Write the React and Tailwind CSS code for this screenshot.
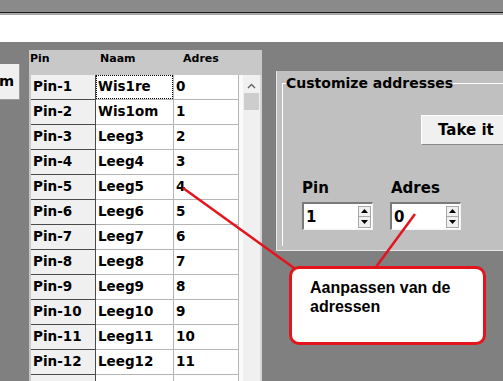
const rows = [
  ["Pin-1", "Wis1re", "0"],
  ["Pin-2", "Wis1om", "1"],
  ["Pin-3", "Leeg3", "2"],
  ["Pin-4", "Leeg4", "3"],
  ["Pin-5", "Leeg5", "4"],
  ["Pin-6", "Leeg6", "5"],
  ["Pin-7", "Leeg7", "6"],
  ["Pin-8", "Leeg8", "7"],
  ["Pin-9", "Leeg9", "8"],
  ["Pin-10", "Leeg10", "9"],
  ["Pin-11", "Leeg11", "10"],
  ["Pin-12", "Leeg12", "11"],
  ["", "", ""],
];

function Spinner({ value }) {
  return (
    <div className="w-[71px] h-[28px] flex items-center bg-white border-t-2 border-l-2 border-[#7a7a7a] border-b border-r border-b-[#f4f4f4] border-r-[#f4f4f4]">
      <span className="flex-1 pl-[2px] text-[15px] leading-[18px] font-bold text-black">{value}</span>
      <div className="flex flex-col mr-[1px]">
        <div className="w-[13px] h-[11px] flex items-center justify-center bg-[#f0f0f0] border border-[#a8a8a8]">
          <svg width="7" height="4" viewBox="0 0 7 4">
            <polygon points="3.5,0 7,4 0,4" fill="#000" />
          </svg>
        </div>
        <div className="w-[13px] h-[11px] flex items-center justify-center bg-[#f0f0f0] border border-[#a8a8a8] border-t-0">
          <svg width="7" height="4" viewBox="0 0 7 4">
            <polygon points="0,0 7,0 3.5,4" fill="#000" />
          </svg>
        </div>
      </div>
    </div>
  );
}

export default function App() {
  return (
    <div className="relative w-[503px] h-[381px] overflow-hidden bg-[#808080] font-['DejaVu_Sans',sans-serif] text-black">
      <div className="h-[12px] bg-[#8a8a8a]" />
      <div className="h-px bg-[#1e1e1e]" />
      <div className="h-[2px] bg-[#a6a6a6]" />
      <div className="h-[27px] bg-white" />

      <div className="flex h-[339px]">
        {/* clipped button on the left */}
        <div className="w-[29px] shrink-0">
          <div className="mt-[22px] w-[20px] h-[36px] flex items-center justify-end bg-[#f0f0f0] border-r border-b border-[#9a9a9a] overflow-hidden">
            <span className="text-[14.5px] font-bold leading-none pr-[5px]">m</span>
          </div>
        </div>

        {/* grid */}
        <div className="mt-[8px] w-[233px] shrink-0 flex flex-col overflow-hidden">
          <div className="h-[25px] shrink-0 flex bg-[#c8c8c8] text-[11px] font-bold leading-[14px] pt-[2px]">
            <div className="w-[67px] pl-[1px]">Pin</div>
            <div className="w-[78px] pl-[4px]">Naam</div>
            <div className="pl-[9px]">Adres</div>
          </div>
          <div className="flex flex-1 bg-[#c8c8c8]">
            <div className="w-[2px]" />
            <div className="w-[208px] flex flex-col">
              {rows.map((r, i) => (
                <div key={i} className="flex h-[25px] shrink-0 text-[13.5px] font-bold leading-none">
                  <div className="w-[65px] flex items-center pl-[2px] bg-[#f0f0f0] border-r border-b border-[#4a4a4a]">
                    {r[0]}
                  </div>
                  <div className="w-[78px] flex items-stretch bg-white border-r border-b border-[#b4b4b4]">
                    <div
                      className={
                        "flex-1 flex items-center pl-[1px] " +
                        (i === 0 ? "border border-dotted border-black" : "border border-transparent")
                      }
                    >
                      {r[1]}
                    </div>
                  </div>
                  <div className="w-[65px] flex items-center pl-[2px] bg-white border-r border-b border-[#b4b4b4]">
                    {r[2]}
                  </div>
                </div>
              ))}
            </div>
            <div className="w-[4px] bg-[#fafafa]" />
            <div className="w-[17px] bg-[#f0f0f0] flex flex-col items-center">
              <svg width="9" height="6" viewBox="0 0 9 6" className="mt-[8px]">
                <polyline points="1,5 4.5,1.5 8,5" fill="none" stroke="#606060" strokeWidth="1.3" />
              </svg>
              <div className="mt-[4px] w-[15px] h-[17px] bg-[#cdcdcd]" />
            </div>
            <div className="w-[2px] bg-[#d6d6d6]" />
          </div>
        </div>

        <div className="w-[14px] shrink-0" />

        {/* right panel */}
        <div className="mt-[29px] h-[180px] flex-1 bg-[#c0c0c0] border-b border-l border-[#e6e6e6] overflow-hidden">
          <fieldset className="mt-[3px] ml-[5px] h-[172px] border-t border-l border-white pl-[3px]">
            <legend className="text-[14px] font-bold leading-[18px]">Customize addresses</legend>
            <div className="ml-[135px] mt-[23px] w-[100px] h-[30px] flex items-center pl-[16px] bg-[#f0f0f0] border-t border-l border-[#fdfdfd] border-b border-b-[#8a8a8a]">
              <span className="text-[15px] font-bold leading-none">Take it</span>
            </div>
            <div className="ml-[16px] mt-[34px] flex gap-[17px]">
              <div className="flex flex-col">
                <span className="text-[15px] font-bold leading-[18px]">Pin</span>
                <div className="mt-[5px]">
                  <Spinner value="1" />
                </div>
              </div>
              <div className="flex flex-col">
                <span className="text-[15px] font-bold leading-[18px] pl-[1px]">Adres</span>
                <div className="mt-[5px]">
                  <Spinner value="0" />
                </div>
              </div>
            </div>
          </fieldset>
        </div>
      </div>

      {/* callout pointers */}
      <svg className="absolute inset-0 pointer-events-none" width="503" height="381">
        <line x1="183" y1="188" x2="294" y2="268" stroke="#e3141c" strokeWidth="2.5" />
        <line x1="415" y1="214" x2="376" y2="267" stroke="#e3141c" strokeWidth="2.5" />
      </svg>

      <div className="absolute left-[289px] top-[266px] w-[197px] h-[79px] bg-white border-[3px] border-[#e3141c] rounded-[10px] pl-[18px] pt-[9px] font-['Liberation_Sans',Arial,sans-serif] text-[16px] font-bold leading-[19px]">
        Aanpassen van de
        <br />
        adressen
      </div>
    </div>
  );
}
